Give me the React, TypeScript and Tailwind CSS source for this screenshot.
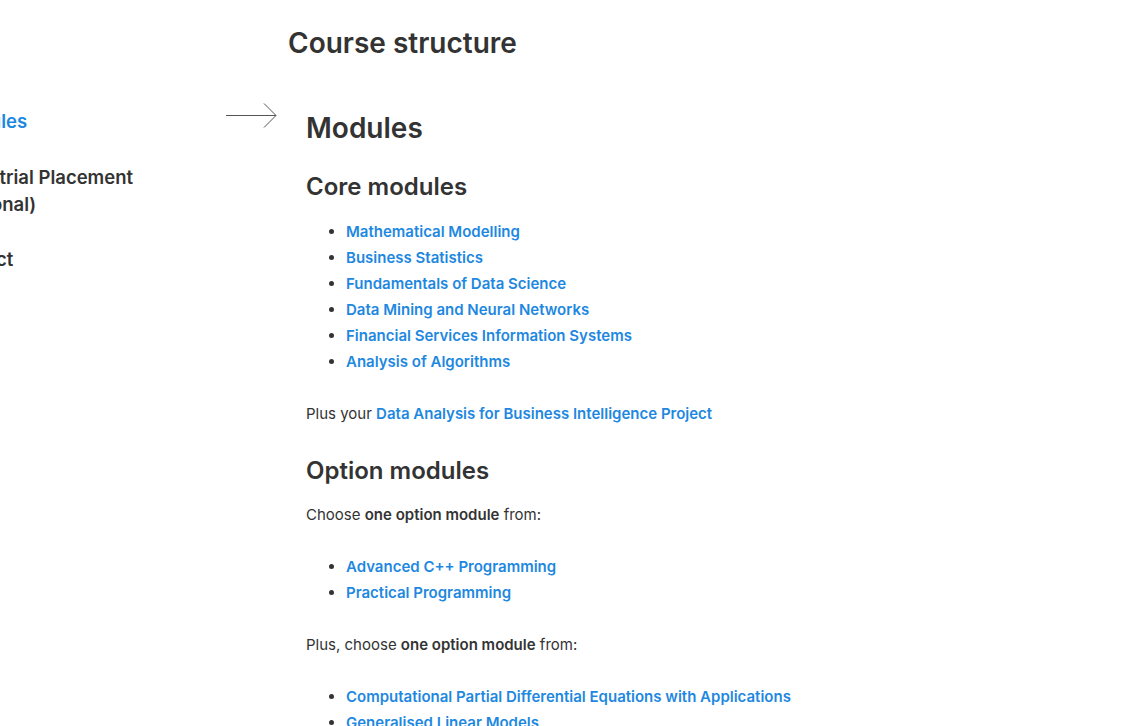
const coreModules = [
  "Mathematical Modelling",
  "Business Statistics",
  "Fundamentals of Data Science",
  "Data Mining and Neural Networks",
  "Financial Services Information Systems",
  "Analysis of Algorithms",
];

const optionA = ["Advanced C++ Programming", "Practical Programming"];
const optionB = [
  "Computational Partial Differential Equations with Applications",
  "Generalised Linear Models",
];

function LinkList({ items }: { items: string[] }) {
  return (
    <ul className="list-disc pl-10">
      {items.map((item) => (
        <li key={item} className="leading-[26px]">
          <a href="#" className="font-semibold text-[#1e88e0]">
            {item}
          </a>
        </li>
      ))}
    </ul>
  );
}

function Arrow() {
  return (
    <svg width="52" height="26" viewBox="0 0 52 26" className="mt-[-6px] shrink-0" fill="none">
      <path d="M0 13.5H50" stroke="#555" strokeWidth="1" />
      <path d="M38 1.5L50 13.5L38 25.5" stroke="#555" strokeWidth="1" />
    </svg>
  );
}

export default function App() {
  return (
    <div className="min-h-screen overflow-hidden bg-white font-['Inter',sans-serif] text-[#333]">
      <div className="ml-[-50px] pt-[25px]">
        <h1 className="ml-[338px] text-[28px] font-semibold leading-9">Course structure</h1>

        <div className="mt-[46px] flex">
          {/* Section nav — partly scrolled off to the left */}
          <nav className="w-[338px] shrink-0 pr-[10px] pt-[1px]">
            <ul className="flex flex-col gap-[28.5px] text-[18.5px] font-semibold leading-[27px]">
              <li className="flex items-start justify-between">
                <a href="#" className="text-[#1e88e0]">Modules</a>
                <Arrow />
              </li>
              <li className="w-[200px]">Industrial Placement (optional)</li>
              <li>Project</li>
            </ul>
          </nav>

          <main className="pl-[18px] pt-[3px] text-[15px]">
            <h2 className="text-[28px] font-semibold leading-9">Modules</h2>

            <h3 className="mt-[25px] text-2xl font-semibold leading-8">Core modules</h3>
            <div className="mt-[16px]">
              <LinkList items={coreModules} />
            </div>
            <p className="mt-[26px] leading-[26px]">
              Plus your{" "}
              <a href="#" className="font-semibold text-[#1e88e0]">
                Data Analysis for Business Intelligence Project
              </a>
            </p>

            <h3 className="mt-[28px] text-2xl font-semibold leading-8">Option modules</h3>
            <p className="mt-[15px] leading-[26px]">
              Choose <strong className="font-semibold">one option module</strong> from:
            </p>
            <div className="mt-[26px]">
              <LinkList items={optionA} />
            </div>
            <p className="mt-[26px] leading-[26px]">
              Plus, choose <strong className="font-semibold">one option module</strong> from:
            </p>
            <div className="mt-[26px]">
              <LinkList items={optionB} />
            </div>
          </main>
        </div>
      </div>
    </div>
  );
}
